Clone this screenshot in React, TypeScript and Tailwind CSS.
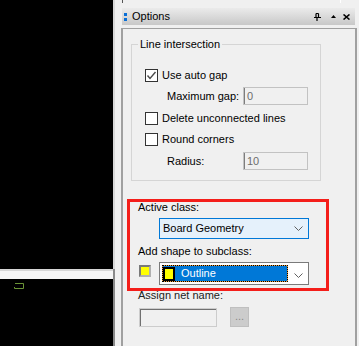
import React from "react";

const Chevron = () => (
  <svg width="9" height="5" viewBox="0 0 9 5" className="block">
    <polyline points="0.5,0.5 4.5,4.5 8.5,0.5" fill="none" stroke="#606060" strokeWidth="1" />
  </svg>
);

function Check({ checked, label }: { checked?: boolean; label: string }) {
  return (
    <div className="flex h-[13px] items-center">
      <div className="h-[13px] w-[13px] border border-[#333333] bg-white">
        {checked && (
          <svg width="11" height="11" viewBox="0 0 11 11" className="block">
            <polyline points="1.5,5.5 4,8.5 9.5,2" fill="none" stroke="#4a4a4a" strokeWidth="1.4" />
          </svg>
        )}
      </div>
      <span className="ml-[4px]">{label}</span>
    </div>
  );
}

function SmallField({ value }: { value: string }) {
  return (
    <div className="h-[18px] w-[65px] border border-[#c2c2c2] bg-[#f0f0f0]">
      <div className="flex h-full items-center border-l border-[#7d7d7d] pl-[2px] text-[#6d6d6d]">{value}</div>
    </div>
  );
}

export default function App() {
  return (
    <div className="relative flex h-[346px] w-[359px] overflow-hidden bg-[#f0f0f0] font-['Liberation_Sans',Arial,sans-serif] text-[11px] leading-[13px] text-black">
      {/* canvas panes */}
      <div className="flex w-[113px] flex-col">
        <div className="h-[269px] bg-black" />
        <div className="h-[10px] border-t-2 border-[#d6d6d6] bg-[#f5f5f5]" />
        <div className="flex-1 bg-black pl-[14px] pt-[4px]">
          <svg width="10" height="6" viewBox="0 0 10 6" className="block">
            <path d="M1 0.5 H9.5 V5.5 H0.5 V4" fill="none" stroke="#6b9436" strokeWidth="1" />
          </svg>
        </div>
      </div>
      <div className="flex w-[2px] flex-col">
        <div className="h-[269px] bg-[#d8d8d8]" />
        <div className="flex-1 bg-[#8a8a8a]" />
      </div>

      {/* options panel */}
      <div className="ml-[6px] flex w-[238px] flex-col">
        <div className="flex h-[8px] items-start">
          <div className="ml-[1px] h-[3px] w-[1px] bg-[#555555]" />
          <div className="ml-[217px] h-[3px] w-[1px] bg-white" />
        </div>
        <div className="ml-[1px] mr-[4px] flex h-[17px] items-center bg-linear-to-b from-[#ebebeb] to-[#c8c8c8]">
          <div className="ml-[2px] flex flex-col gap-[2px]">
            <div className="h-[3px] w-[3px] bg-[#0a6fd6]" />
            <div className="h-[3px] w-[3px] bg-[#0a6fd6]" />
          </div>
          <span className="ml-[5px]">Options</span>
          <div className="ml-auto mr-[5px] flex items-center">
            <svg width="7" height="8" viewBox="0 0 7 8" className="block">
              <path d="M2 0.5 V4 M4.5 0.5 V4 M2 0.5 H4.5 M0 4.5 H7 M3 4.5 V8" fill="none" stroke="#000" strokeWidth="1.2" />
            </svg>
            <svg width="5" height="3" viewBox="0 0 5 3" className="ml-[10px] block">
              <polygon points="0,3 2.5,0 5,3" fill="#000" />
            </svg>
            <svg width="7" height="6" viewBox="0 0 7 6" className="ml-[7px] block">
              <path d="M0.5 0.5 L6.5 5.5 M6.5 0.5 L0.5 5.5" fill="none" stroke="#000" strokeWidth="1.6" />
            </svg>
          </div>
        </div>

        <div className="mr-[2px] mt-[3px] flex-1 border-l-2 border-r-2 border-t border-[#a0a0a0]">
          <fieldset className="ml-[8px] mt-[9px] w-[190px] border border-[#d5d5d5]">
            <legend className="ml-[6px] px-[2px] leading-[13px]">Line intersection</legend>
            <div className="pb-[10px] pl-[13px] pt-[18px]">
              <Check checked label="Use auto gap" />
              <div className="mt-[5px] flex h-[18px] items-center">
                <span className="ml-[22px] w-[76px]">Maximum gap:</span>
                <SmallField value="0" />
              </div>
              <div className="mt-[7px]">
                <Check label="Delete unconnected lines" />
              </div>
              <div className="mt-[8px]">
                <Check label="Round corners" />
              </div>
              <div className="mt-[6px] flex h-[18px] items-center">
                <span className="ml-[22px] w-[76px]">Radius:</span>
                <SmallField value="10" />
              </div>
            </div>
          </fieldset>

          <div className="ml-[15px] mt-[20px]">Active class:</div>
          <div className="ml-[36px] mt-[4px] flex h-[21px] w-[150px] items-center border border-[#0078d7] bg-[#e5f1fb] pl-[3px]">
            <span>Board Geometry</span>
            <div className="ml-auto mr-[5px]">
              <Chevron />
            </div>
          </div>

          <div className="ml-[15px] mt-[6px]">Add shape to subclass:</div>
          <div className="ml-[16px] mt-[4px] flex items-start">
            <div className="mt-[3px] h-[12px] w-[12px] border-2 border-b-[#b0b0b0] border-l-[#7a7a7a] border-r-[#b0b0b0] border-t-[#7a7a7a] bg-[#ffff00]" />
            <div className="ml-[8px] flex h-[23px] w-[150px] items-start border border-[#7a7a7a] bg-white pl-[2px] pt-[2px]">
              <div className="h-[17px] w-[126px] bg-[#f0a040]">
                <div className="flex h-full items-center border border-dotted border-black bg-[#0078d7] bg-clip-padding">
                  <div className="h-[14px] w-[12px] border-2 border-black bg-[#ffff00]" />
                  <span className="ml-[6px] text-white">Outline</span>
                </div>
              </div>
              <div className="ml-auto mr-[5px] mt-[8px]">
                <Chevron />
              </div>
            </div>
          </div>

          <div className="ml-[15px] mt-[4px] text-[#222222]">Assign net name:</div>
          <div className="ml-[16px] mt-[6px] flex items-start">
            <div className="h-[19px] w-[78px] border border-[#cccccc] bg-[#f0f0f0]">
              <div className="h-full border-l border-t border-[#707070]" />
            </div>
            <div className="-mt-[1px] ml-[13px] flex h-[20px] w-[19px] items-end justify-center border border-[#bfbfbf] bg-[#cccccc] pb-[3px] text-[#8a8a8a]">
              ...
            </div>
          </div>
        </div>
      </div>

      {/* annotation */}
      <div className="pointer-events-none absolute left-[127px] top-[199px] h-[92px] w-[202px] border-[3px] border-[#f41e1a]" />
    </div>
  );
}
